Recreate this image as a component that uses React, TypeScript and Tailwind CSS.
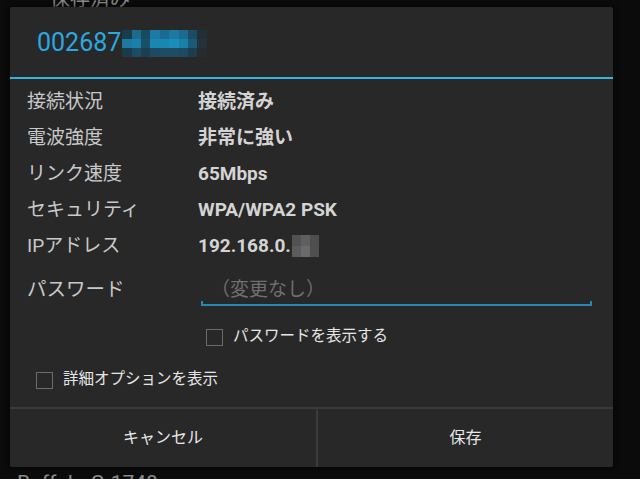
import React from 'react';

const jp = { fontFamily: 'Roboto, "Noto Sans CJK JP", sans-serif' };

// pixelated (mosaic) parts of the SSID and IP, drawn as colour blocks
const ssidBlur: string[][] = [
  ['#1c3c4c', '#1d6a8e', '#1a4a62', '#1c7aa4', '#1b6a8f', '#1b7aa3', '#1c6a8e', '#1a4c64', '#222f36'],
  ['#1b7aa2', '#1a7fab', '#184f69', '#1a86b4', '#1a86b3', '#1b8dbc', '#1a80ab', '#1a5a78', '#243239'],
  ['#1c3a49', '#1c4c63', '#1c3e4f', '#1d4a60', '#1c4d65', '#1d4c63', '#1d4a60', '#1d3d4d', '#262d31'],
];

const ipBlur: string[][] = [
  ['#525252', '#5f5f5f', '#4e4e4e'],
  ['#5c5c5c', '#6a6a6a', '#4f4f4f'],
];

const rows: [string, React.ReactNode][] = [
  ['接続状況', '接続済み'],
  ['電波強度', '非常に強い'],
  ['リンク速度', '65Mbps'],
  ['セキュリティ', 'WPA/WPA2 PSK'],
  [
    'IPアドレス',
    <span className="flex items-center">
      192.168.0.
      <span className="flex flex-col ml-[1px]">
        {ipBlur.map((r, i) => (
          <span key={i} className="flex">
            {r.map((c, j) => (
              <span key={j} className="block w-[9px] h-[11px]" style={{ backgroundColor: c }} />
            ))}
          </span>
        ))}
      </span>
    </span>,
  ],
];

const Checkbox: React.FC<{ label: string; className?: string }> = ({ label, className }) => (
  <div className={`flex items-center ${className ?? ''}`}>
    <span className="block w-[17px] h-[17px] border-[1.5px] border-[#6b6b6b]" />
    <span className="ml-[10px] text-[15.5px] text-[#e6e6e6]">{label}</span>
  </div>
);

const App: React.FC = () => {
  return (
    <div className="relative w-[640px] h-[479px] overflow-hidden bg-[#0b0b0b]" style={jp}>
      {/* saved networks list behind the dialog */}
      <div className="flex flex-col justify-between h-full">
        <div className="pl-[50px] -mt-[16px] text-[20px] text-[#8c8c8c]">保存済み</div>
        <div className="pl-[17px] -mb-[20px] text-[21px] text-[#8a8a8a]">Buffalo-G-1748</div>
      </div>

      {/* dialog */}
      <div className="absolute left-[10px] top-[7px] w-[603px] h-[460px] bg-[#282828] rounded-[2px] shadow-[0_0_6px_rgba(0,0,0,0.8)] flex flex-col">
        <div className="h-[70px] flex items-center pl-[27px]">
          <span className="text-[25px] text-[#2aa9e0] leading-none">002687</span>
          <span className="flex flex-col ml-[1px] mt-[2px]">
            {ssidBlur.map((r, i) => (
              <span key={i} className="flex">
                {r.map((c, j) => (
                  <span key={j} className="block w-[9.4px] h-[9px]" style={{ backgroundColor: c }} />
                ))}
              </span>
            ))}
          </span>
        </div>
        <div className="h-[2px] bg-[#33b5e5]" />

        <div className="pt-[5px] pl-[17px] flex flex-col">
          {rows.map(([label, value], i) => (
            <div key={i} className="h-[36px] flex items-center">
              <span className="w-[171px] text-[19px] text-[#c9c9c9]">{label}</span>
              <span className="text-[19px] font-bold text-[#d4d4d4]">{value}</span>
            </div>
          ))}

          <div className="h-[52px] flex items-center pr-[21px]">
            <span className="w-[174px] text-[19.5px] text-[#c9c9c9]">パスワード</span>
            <div className="flex-1 h-[32px] relative flex items-center pl-[10px]">
              <span className="text-[19px] text-[#6f6f6f]">（変更なし）</span>
              <span className="absolute left-0 right-0 bottom-0 h-[2px] bg-[#2589b8]" />
              <span className="absolute left-0 bottom-0 w-[2px] h-[5px] bg-[#2589b8]" />
              <span className="absolute right-0 bottom-0 w-[2px] h-[5px] bg-[#2589b8]" />
            </div>
          </div>

          <div className="h-[42px] flex items-center">
            <Checkbox label="パスワードを表示する" className="ml-[179px]" />
          </div>
          <div className="h-[44px] flex items-center">
            <Checkbox label="詳細オプションを表示" className="ml-[9px]" />
          </div>
        </div>

        <div className="mt-auto h-[60px] border-t-[2px] border-[#3a3a3a] flex">
          <button className="w-[308px] flex items-center justify-center text-[16px] text-[#e8e8e8] border-r-[2px] border-[#3a3a3a]">
            キャンセル
          </button>
          <button className="flex-1 flex items-center justify-center text-[16px] text-[#e8e8e8]">
            保存
          </button>
        </div>
      </div>
    </div>
  );
};

export default App;
